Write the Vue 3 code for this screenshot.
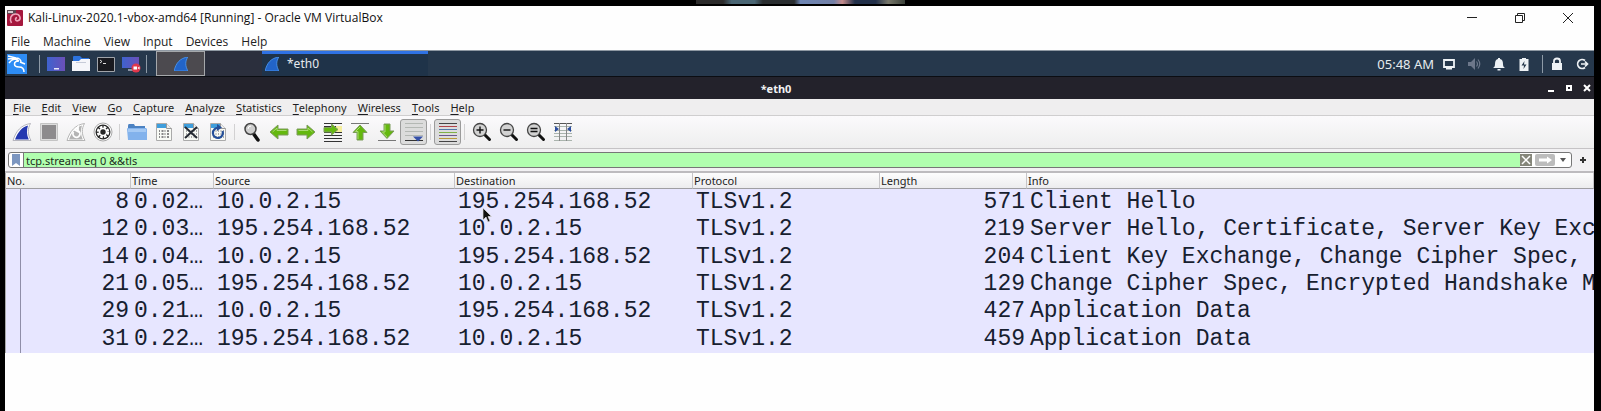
<script setup>
import { ref } from 'vue'

const filter = ref('tcp.stream eq 0 &&tls')
const machineMenu = ['File', 'Machine', 'View', 'Input', 'Devices', 'Help']
const appMenu = ['File', 'Edit', 'View', 'Go', 'Capture', 'Analyze', 'Statistics', 'Telephony', 'Wireless', 'Tools', 'Help']
const columns = ['No.', 'Time', 'Source', 'Destination', 'Protocol', 'Length', 'Info']
const a = '10.0.2.15'
const b = '195.254.168.52'
const packets = [
  { no: 8, time: '0.02…', src: a, dst: b, len: 571, info: 'Client Hello' },
  { no: 12, time: '0.03…', src: b, dst: a, len: 219, info: 'Server Hello, Certificate, Server Key Exc' },
  { no: 14, time: '0.04…', src: a, dst: b, len: 204, info: 'Client Key Exchange, Change Cipher Spec,' },
  { no: 21, time: '0.05…', src: b, dst: a, len: 129, info: 'Change Cipher Spec, Encrypted Handshake M' },
  { no: 29, time: '0.21…', src: a, dst: b, len: 427, info: 'Application Data' },
  { no: 31, time: '0.22…', src: b, dst: a, len: 459, info: 'Application Data' },
]
</script>

<template>
  <div class="screen">
    <div class="behind"><div class="webcam"></div></div>
    <div class="vm">
      <header class="vm-title">
        <svg class="i16" viewBox="0 0 16 16"><rect width="16" height="16" rx="1" fill="#a5173d" /><path d="M0 0h9v4H0z" fill="#5b4650" /><path d="M1 1h5v2H1z" fill="#d8c9cf" /><path d="M4.500 13C2 9 4 4 8.500 4s6 5 3 6.500-4-2-1.500-3" fill="none" stroke="#f0a4ba" stroke-width="1.600" /></svg>
        <span class="vm-name">Kali-Linux-2020.1-vbox-amd64 [Running] - Oracle VM VirtualBox</span>
        <div class="win-buttons">
          <button aria-label="Minimize"><svg viewBox="0 0 12 12"><path d="M1 5.500h10" stroke="#222" /></svg></button>
          <button aria-label="Restore"><svg viewBox="0 0 12 12"><path d="M1.500 3.500h7v7h-7zM3.500 3V1.500h7v7H9" fill="none" stroke="#222" /></svg></button>
          <button aria-label="Close"><svg viewBox="0 0 12 12"><path d="M1 1l10 10M11 1L1 11" stroke="#222" /></svg></button>
        </div>
      </header>
      <nav class="vm-menu"><button v-for="m in machineMenu" :key="m">{{ m }}</button></nav>

      <div class="panel">
        <button class="kali" aria-label="Applications"><svg viewBox="0 0 20 20"><rect width="20" height="20" fill="#2d8cf5" /><path d="M1 2l8 2M1 5l8-1M2 9c3-4 7-5 10-2M9 4c3 0 5 2 5 4M12 7c-6 0-6 6 0 6 3 0 5 2 5 5M13 8l5 2" fill="none" stroke="#fff" stroke-width="1.500" /></svg></button>
        <i class="sep"></i>
        <button class="launch" aria-label="Desktop"><svg viewBox="0 0 20 18"><defs><linearGradient id="dk"><stop stop-color="#3e63cf" /><stop offset="1" stop-color="#6b50b8" /></linearGradient></defs><path d="M1 2h18v14H1z" fill="url(#dk)" /><path d="M8 13h5v1.500H8z" fill="#e8e8f8" /></svg></button>
        <button class="launch" aria-label="Files"><svg viewBox="0 0 20 18"><path d="M2 2q0-1 1-1h6l2 2h7v4H2z" fill="#2c73dd" /><path d="M1 6h7l2-2h9v12H1z" fill="#f5f6fa" /><path d="M5 7h10v1H5z" fill="#c6cbd8" /></svg></button>
        <button class="launch" aria-label="Terminal"><svg viewBox="0 0 20 18"><path d="M1.500 2.500h17v14h-17z" fill="#191a1f" stroke="#a0a4aa" /><path d="M4 5l2 1.500L4 8M7 8.500h3" stroke="#ddd" fill="none" /></svg></button>
        <button class="launch" aria-label="Screen recorder"><svg viewBox="0 0 20 18"><path d="M1 2h17v11H1z" fill="url(#dk)" /><path d="M7 14h6v2H7z" fill="#8b93a3" /><circle cx="15" cy="13" r="4.500" fill="#e0384c" /><path d="M12.500 11.500h3.500v3h-3.500zM16.500 13l2-1.500v3z" fill="#fff" /></svg></button>
        <i class="sep"></i>
        <button class="workspace" aria-label="Workspace 1"><svg viewBox="0 0 14 14"><path d="M0 14C2 6 6 1 14 0c-3 4-3 9 0 14z" fill="#2264c8" stroke="#4d9af5" stroke-width=".8" /></svg></button>
        <button class="workspace second" aria-label="Workspace 2"></button>
        <button class="task"><svg viewBox="0 0 14 14"><path d="M0 14C2 6 6 1 14 0c-3 4-3 9 0 14z" fill="#2264c8" stroke="#4d9af5" stroke-width=".8" /></svg><span>*eth0</span></button>
        <div class="tray">
          <span class="clock">05:48 AM</span>
          <svg viewBox="0 0 14 14"><path d="M2 3h10v7H2zM4 11.500h6" fill="none" stroke="#eef2f5" stroke-width="1.800" /></svg>
          <svg viewBox="0 0 14 14" opacity=".35"><path d="M1 5h3l4-4v12L4 9H1z" fill="#eef" /><path d="M9.500 4.500q2 2.500 0 5M11 2.500q3.500 4.500 0 9" fill="none" stroke="#eef" stroke-width="1.200" /></svg>
          <svg viewBox="0 0 14 14"><path d="M6 1h2v1q3 .5 3 5c0 2 .5 3 2 4H1c1.500-1 2-2 2-4q0-4.500 3-5zM5.500 12h3v1.500h-3z" fill="#eef2f5" /></svg>
          <svg viewBox="0 0 14 14"><path d="M3 2h2V1h4v1h2.500v12h-9V2z" fill="#eef2f5" /><path d="M7.500 4L4.500 8.500H7L6.500 12l3-4.500H7z" fill="#26384c" /></svg>
          <i class="sep"></i>
          <svg viewBox="0 0 14 14"><path d="M4 7V4q0-2.500 3-2.500T10 4v3" fill="none" stroke="#eef2f5" stroke-width="1.800" /><path d="M2 6h10v7H2z" fill="#eef2f5" /></svg>
          <svg viewBox="0 0 14 14"><path d="M10 3.500A4.500 4.500 0 1 0 10 10.500M6 7h6.500M10 4.500L12.500 7 10 9.500" fill="none" stroke="#eef2f5" stroke-width="1.700" /></svg>
        </div>
      </div>

      <header class="app-title">
        <strong>*eth0</strong>
        <div class="app-buttons">
          <button aria-label="Minimize window"><svg viewBox="0 0 8 8"><path d="M1 7h6" stroke="#fff" stroke-width="2" /></svg></button>
          <button aria-label="Maximize window"><svg viewBox="0 0 8 8"><path d="M2 2h4v4H2z" fill="none" stroke="#fff" stroke-width="2" /></svg></button>
          <button aria-label="Close window"><svg viewBox="0 0 8 8"><path d="M1 1l6 6M7 1L1 7" stroke="#fff" stroke-width="2" /></svg></button>
        </div>
      </header>
      <nav class="app-menu"><button v-for="m in appMenu" :key="m"><u>{{ m[0] }}</u>{{ m.slice(1) }}</button></nav>

      <div class="toolbar">
        <button aria-label="Start capture"><svg viewBox="0 0 20 20"><path d="M1 18.500C4 9 9 3 18.500 1.500c-3 5-3 11 .5 17z" fill="#fff" stroke="#b5b5bd" /><path d="M3 17.500C6 10 10 5 16 3.500c-1.500 5-1.500 9 .8 14z" fill="#2438b0" /></svg></button>
        <button aria-label="Stop capture"><svg viewBox="0 0 20 20"><path d="M1.500 1.500h17v17h-17z" fill="#ddd" stroke="#c4c4c4" /><path d="M3 3h14v14H3z" fill="#8d8b8d" /></svg></button>
        <button aria-label="Restart capture"><svg viewBox="0 0 20 20"><path d="M1 18.500C4 9 9 3 18.500 1.500c-3 5-3 11 .5 17z" fill="#fff" stroke="#b5b5b5" /><path d="M3 17.500C6 10 10 5 16 3.500c-1.500 5-1.500 9 .8 14z" fill="#b4b4b4" /><path d="M12.500 9a3.500 3.500 0 1 1-5 1M12 5v4.500L9 8z" fill="none" stroke="#fff" stroke-width="1.800" /></svg></button>
        <button aria-label="Capture options"><svg viewBox="0 0 20 20"><circle cx="10" cy="10" r="9" fill="#fff" stroke="#a8a8a8" /><circle cx="10" cy="10" r="7.500" fill="#262626" /><circle cx="10" cy="10" r="5" fill="none" stroke="#fff" stroke-width="2.400" stroke-dasharray="2.700 1.227" /><circle cx="10" cy="10" r="4.200" fill="#fff" /><circle cx="10" cy="10" r="2.700" fill="#262626" /></svg></button>
        <i class="tsep"></i>
        <button aria-label="Open"><svg viewBox="0 0 20 20"><path d="M1 4q0-2 1-2h5l1 2h10v4H1z" fill="#4c82c2" /><path d="M0 7q0-1 1-1h18l1 1v11H1z" fill="#82b2ec" /><path d="M1 7h18v3H1z" fill="#a4c9f4" /></svg></button>
        <button aria-label="Save"><svg viewBox="0 0 20 20"><path d="M2.500 1.500h10l5 5v12h-15z" fill="#f8faf5" stroke="#aaa" /><path d="M3 2h9v4H3z" fill="#3f9edc" /><path d="M12.500 1.500v5h5" fill="#eee" stroke="#999" /><path d="M5 9h11M5 12h11M5 15h11" stroke="#888" stroke-width="2" stroke-dasharray="1 1.500 2 1" /></svg></button>
        <button aria-label="Close file"><svg viewBox="0 0 20 20"><path d="M2.500 1.500h10l5 5v12h-15z" fill="#f8faf5" stroke="#aaa" /><path d="M3 2h9v4H3z" fill="#3f9edc" /><path d="M12.500 1.500v5h5" fill="#eee" stroke="#999" /><path d="M5 9h11M5 12h11M5 15h11" stroke="#aaa" stroke-width="2" stroke-dasharray="1 1.500" /><path d="M4 5l12 11M16 5L4 16" stroke="#262b33" stroke-width="2" /></svg></button>
        <button aria-label="Reload"><svg viewBox="0 0 20 20"><path d="M2.500 1.500h10l5 5v12h-15z" fill="#f8faf5" stroke="#aaa" /><path d="M3 2h9v4H3z" fill="#3f9edc" /><path d="M12.500 1.500v5h5" fill="#eee" stroke="#999" /><path d="M5 9h11M5 12h11M5 15h11" stroke="#aaa" stroke-width="2" stroke-dasharray="1 1.500" /><path d="M14.500 9a5 5 0 1 1-4-3" fill="none" stroke="#244f99" stroke-width="2.200" /><path d="M9 2l5 3.500-5 3.500z" fill="#244f99" /></svg></button>
        <i class="tsep"></i>
        <button aria-label="Find packet"><svg viewBox="0 0 20 20"><path d="M11 11l5 7" stroke="#111" stroke-width="3.500" stroke-linecap="round" /><circle cx="8.500" cy="7" r="5.500" fill="#cfcfcf" stroke="#444" stroke-width="1.500" /><path d="M6 7q0-3 3-3" stroke="#fff" fill="none" /></svg></button>
        <button aria-label="Go back"><svg viewBox="0 0 20 20"><path d="M1 10l8-7v4h10v6H9v4z" fill="#64b80e" stroke="#7c9b5c" /><path d="M3.500 10l4.500-4v2.500h9.500" fill="none" stroke="#a9da72" /></svg></button>
        <button aria-label="Go forward"><svg viewBox="0 0 20 20"><path d="M19 10l-8-7v4H1v6h10v4z" fill="#64b80e" stroke="#7c9b5c" /><path d="M2.500 8.500H12V6l4.500 4" fill="none" stroke="#a9da72" /></svg></button>
        <button aria-label="Go to packet"><svg viewBox="0 0 20 20"><path d="M1 1.500h18M1 4.500h18M1 13.500h18M1 16.500h18M1 19.500h18M1 10.500h18" stroke="#333" /><path d="M13 4h6v6h-6z" fill="#f5ee9c" /><path d="M15 7.500L8.500 2v3.500H1v4.500h7.500v3z" fill="#64b80e" stroke="#7c9b5c" /></svg></button>
        <button aria-label="First packet"><svg viewBox="0 0 20 20"><path d="M1 1.500h18" stroke="#777" /><path d="M10 3l7 7.500h-4V18H7v-7.500H3z" fill="#64b80e" stroke="#7c9b5c" /><path d="M10 5L5.500 9.500H8V17" fill="none" stroke="#a9da72" /></svg></button>
        <button aria-label="Last packet"><svg viewBox="0 0 20 20"><path d="M1 18.500h18" stroke="#777" /><path d="M10 16.500L3 9h4V2h6v7h4z" fill="#64b80e" stroke="#7c9b5c" /><path d="M8 3v7H5.500l4.500 5" fill="none" stroke="#a9da72" /></svg></button>
        <button class="on" aria-label="Auto scroll"><svg viewBox="0 0 20 20"><path d="M1 1.500h18M1 5.500h18M1 9.500h18M1 13.500h18" stroke="#b4b8b4" /><path d="M1 18.500h18" stroke="#333" /><path d="M9 14.500h10L14 19.500z" fill="#3450a8" /></svg></button>
        <i class="tsep"></i>
        <button class="on" aria-label="Colorize"><svg viewBox="0 0 20 20"><path d="M1 1.500h18" stroke="#444" /><path d="M1 4.500h18" stroke="#b0434a" /><path d="M1 7.500h18" stroke="#5277a8" /><path d="M1 10.500h18" stroke="#80b146" /><path d="M1 13.500h18" stroke="#6c568b" /><path d="M1 16.500h18" stroke="#b99a38" /><path d="M1 19.500h18" stroke="#444" /></svg></button>
        <i class="tsep"></i>
        <button v-for="z in ['in', 'out', 'reset']" :key="z" :aria-label="'Zoom ' + z"><svg viewBox="0 0 20 20"><path d="M12 12l5.500 5.500" stroke="#111" stroke-width="3" stroke-linecap="round" /><circle cx="8" cy="8" r="6.500" fill="#d2d2d2" stroke="#444" stroke-width="1.300" /><path v-if="z === 'in'" d="M4.500 8h7M8 4.500v7" stroke="#111" stroke-width="1.400" /><path v-else-if="z === 'out'" d="M4.500 8h7" stroke="#111" stroke-width="1.400" /><path v-else d="M4.500 6.500h7M4.500 9.500h7" stroke="#111" stroke-width="1.400" /></svg></button>
        <button aria-label="Resize columns"><svg viewBox="0 0 20 20"><path d="M1 4.500h18M1 8.500h18M1 11.500h18M1 14.500h18M1 18.500h18" stroke="#aab4ad" /><path d="M1 1.500h18" stroke="#555" /><path d="M6.500 1v18M13.500 1v18" stroke="#888" /><path d="M2 4l4 3-4 3zM18 4l-4 3 4 3z" fill="#2e4f9f" /></svg></button>
      </div>

      <form class="filter" @submit.prevent>
        <div class="field">
          <button type="button" class="mark" aria-label="Bookmarks"><svg viewBox="0 0 8 12"><path d="M0 0h8v12L4 9l-4 3z" fill="#7c96c0" /></svg></button>
          <input v-model="filter" aria-label="Display filter" spellcheck="false">
          <button type="button" class="clear" aria-label="Clear filter"><svg viewBox="0 0 12 12"><path d="M0 0h12v12H0z" fill="#85867a" /><path d="M2 2l8 8M10 2l-8 8" stroke="#fff" stroke-width="1.500" /></svg></button>
          <button class="apply" aria-label="Apply filter"><svg viewBox="0 0 20 12"><rect width="20" height="12" rx="2" fill="#bcbcbc" /><path d="M4 4.500h8V2.500l5 3.500-5 3.500v-2H4z" fill="#fff" /></svg></button>
          <button type="button" class="drop" aria-label="Recent filters"><svg viewBox="0 0 6 4"><path d="M0 0h6L3 4z" fill="#555" /></svg></button>
        </div>
        <button type="button" class="add" aria-label="Add filter button"><svg viewBox="0 0 8 8"><path d="M4 1v6M1 4h6" stroke="#333" stroke-width="2" /></svg></button>
      </form>

      <div class="packets">
        <table>
          <colgroup><col v-for="c in columns" :key="c" :class="'c-' + c.replace('.', '').toLowerCase()"></colgroup>
          <thead><tr><th v-for="c in columns" :key="c" scope="col">{{ c }}</th></tr></thead>
          <tbody>
            <tr v-for="p in packets" :key="p.no">
              <td class="num tree">{{ p.no }}</td><td>{{ p.time }}</td><td>{{ p.src }}</td><td>{{ p.dst }}</td><td>TLSv1.2</td><td class="num">{{ p.len }}</td><td>{{ p.info }}</td>
            </tr>
          </tbody>
        </table>
        <svg class="pointer" viewBox="0 0 10 16"><path d="M1 1v12l3-3 2 5 2-1-2-4.500h3.500z" fill="#111" stroke="#ddd" stroke-width=".7" /></svg>
      </div>
    </div>
  </div>
</template>

<style>
body { background: #000; }
</style>

<style scoped>
.screen { min-height: 100vh; display: flex; flex-direction: column; background: #000; font-family: "Noto Sans", "Open Sans", sans-serif; font-size: 11px; color: #1d1d22; }
.behind { height: 6px; flex: none; }
.webcam { width: 13%; height: 4px; margin-left: 43.5%; background: linear-gradient(90deg, #2c2b2b 0 13%, #4a6674 17% 28%, #2a2e30 32% 47%, #6e86b4 50%, #7380a6 66%, #c58c8c 70%, #22304a 76% 86%, #77776a 92%, #3a4038); }
.vm { flex: 1; display: flex; flex-direction: column; margin: 0 7px 0 5px; background: #fefefe; overflow: hidden; }
button { display: flex; align-items: center; justify-content: center; margin: 0; padding: 0; border: 0; background: none; font: inherit; color: inherit; }
svg { display: block; flex: none; }
.vm-title { display: flex; align-items: center; height: 23px; padding: 0 20px 0 2px; font-family: "Open Sans", "Noto Sans", sans-serif; font-size: 12px; color: #111; }
.i16 { width: 16px; height: 16px; }
.vm-name { margin-left: 5px; flex: 1; white-space: nowrap; }
.win-buttons { display: flex; gap: 36px; }
.win-buttons svg { width: 12px; height: 12px; }
.vm-menu { display: flex; gap: 13px; height: 22px; padding: 3px 0 0 6px; box-sizing: border-box; border-bottom: 1px solid #8f99a3; font-family: "Open Sans", "Noto Sans", sans-serif; font-size: 12px; color: #222; }

.panel { display: flex; align-items: center; height: 25px; background: #26384c; border-bottom: 1px solid #0b0d12; color: #e6ebef; font-size: 12px; }
.kali { margin-left: 2px; }
.kali svg { width: 20px; height: 20px; }
.sep { width: 1px; height: 18px; background: #8d9aa6; margin: 0 3px 0 12px; }
.launch { width: 25px; }
.launch svg { width: 20px; height: 18px; }
.launch + .sep { margin: 0 9px 0 3px; }
.workspace { width: 49px; height: 25px; border: 1px solid #a5a8ab; background: #4c4a4f; }
.workspace svg, .task svg { width: 14px; height: 14px; }
.second { width: 57px; border: 0; background: #2b2f3d; }
.task { width: 166px; height: 25px; justify-content: flex-start; gap: 8px; padding-left: 3px; box-shadow: inset 0 3px #2f72e4; background: #1f3349; }
.tray { flex: 1; display: flex; align-items: center; justify-content: flex-end; gap: 11px; padding-right: 5px; }
.tray svg { width: 14px; height: 14px; }
.tray .sep { margin: 0 -4px 0 0; }
.clock { margin-right: -3px; font-size: 13px; }

.app-title { display: flex; align-items: center; height: 22px; background: #23222b; color: #f2f2f4; }
.app-title strong { flex: 1; text-align: center; font-size: 11px; }
.app-buttons { display: flex; justify-content: flex-end; gap: 10px; padding-right: 3px; }
.app-buttons svg { width: 8px; height: 8px; }
.app-menu { display: flex; gap: 11px; height: 16px; padding-left: 8px; background: #efeeef; border-bottom: 1px solid #cfcecf; }
.app-menu u { text-underline-offset: 2px; }
.toolbar { display: flex; align-items: center; height: 32px; padding-left: 3px; background: linear-gradient(#fbfafc, #eeeeee); border-bottom: 1px solid #c5c3c5; }
.toolbar button { width: 27px; height: 26px; border: 1px solid transparent; box-sizing: border-box; }
.toolbar svg { width: 20px; height: 20px; }
.toolbar .on { border-color: #9b9b9b; border-radius: 3px; background: #dcdcdc; }
.tsep { width: 1px; height: 16px; margin: 0 3px; background: #d2d1d2; }
.filter { display: flex; align-items: center; height: 22px; padding: 0 0 0 3px; background: #f2f1f3; border-bottom: 2px solid #bdbbbe; }
.field { flex: 1; display: flex; align-items: center; height: 14px; border: 1px solid #777; border-radius: 3px; background: #fff; overflow: hidden; }
.mark { width: 15px; height: 14px; border-right: 1px solid #777; }
.mark svg { width: 8px; height: 12px; }
.field input { flex: 1; min-width: 0; height: 14px; padding: 0 2px; border: 0; outline: 0; box-sizing: border-box; background: #b1ffaf; font: inherit; color: #1d2d1d; }
.clear svg { width: 12px; height: 12px; }
.apply { margin-left: 3px; }
.apply svg { width: 20px; height: 12px; }
.drop { width: 16px; }
.drop svg { width: 6px; height: 4px; }
.add { width: 22px; }
.add svg { width: 8px; height: 8px; }

.packets { position: relative; overflow: hidden; border-left: 1px solid #aaa; }
table { width: 100%; table-layout: fixed; border-collapse: separate; border-spacing: 0; }
.c-no { width: 125px; }
.c-time { width: 83px; }
.c-source { width: 241px; }
.c-destination { width: 238px; }
.c-protocol { width: 187px; }
.c-length { width: 147px; }
th { height: 16px; padding: 0 1px; box-sizing: border-box; border-right: 1px solid #c6c5c8; border-bottom: 1px solid #9f9ea2; background: linear-gradient(#fdfdfd, #ececee); font-weight: 400; line-height: 15px; text-align: left; }
td { height: 27px; padding: 0 3px; background: #e7e6ff; font-family: "Liberation Mono", monospace; font-size: 23px; line-height: 27px; color: #17202f; white-space: nowrap; overflow: hidden; }
tr:nth-child(3n) td { height: 28px; }
.num { padding-right: 2px; text-align: right; }
.tree { background: linear-gradient(90deg, #e7e6ff 14px, #8f8ea8 14px 15px, #e7e6ff 15px); }
.pointer { position: absolute; left: 476px; top: 34px; width: 10px; height: 16px; }
</style>
